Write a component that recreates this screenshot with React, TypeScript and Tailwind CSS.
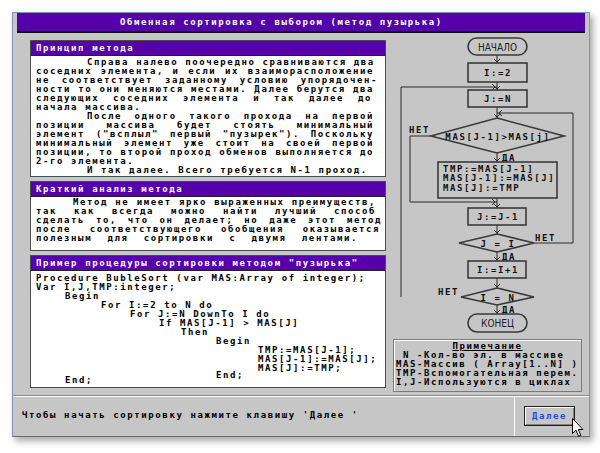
import React from "react";

const MONO = "font-['DejaVu_Sans_Mono',monospace] font-bold text-[9px] tracking-[1.6px] leading-[9px]";

type L = { t: string; pl?: number; w?: number; j?: boolean; mt?: number };

function Lines({ lines, base }: { lines: L[]; base: number }) {
  return (
    <>
      {lines.map((l, i) => (
        <div
          key={i}
          className={"whitespace-nowrap h-[9px] " + (l.j ? "text-justify [text-align-last:justify]" : "")}
          style={{ paddingLeft: l.pl ?? 0, width: l.w ?? base, marginTop: l.mt ?? 0 }}
        >
          {l.t}
        </div>
      ))}
    </>
  );
}

function Panel({ title, bodyH, pt, children }: { title: string; bodyH: number; pt: number; children: React.ReactNode }) {
  return (
    <div className="w-[356px] border border-[#4a4a4a] bg-white">
      <div className="h-[15px] bg-[#5500aa] text-white flex items-center pl-[5px] border-b border-[#202020]">
        <span className={MONO}>{title}</span>
      </div>
      <div className={"pl-[5px] text-black " + MONO} style={{ height: bodyH, paddingTop: pt }}>
        {children}
      </div>
    </div>
  );
}

const p1: L[] = [
  { t: "Справа налево поочередно сравниваются два", pl: 51, j: true },
  { t: "соседних элемента, и если их взаиморасположение", j: true },
  { t: "не соответствует заданному условию упорядочен-", j: true, w: 342 },
  { t: "ности то они меняются местами. Далее берутся два", j: true },
  { t: "следующих соседних элемента и так далее до", j: true, w: 336 },
  { t: "начала массива." },
  { t: "После одного такого прохода на первой", pl: 51, j: true },
  { t: "позиции массива будет стоять минимальный", j: true },
  { t: "элемент (\"всплыл\" первый \"пузырек\"). Поскольку", j: true },
  { t: "минимальный элемент уже стоит на своей первой", j: true },
  { t: "позиции, то второй проход обменов выполняется до", j: true },
  { t: "2-го элемента." },
  { t: "И так далее. Всего требуется N-1 проход.", pl: 51 },
];

const p2: L[] = [
  { t: "Метод не имеет ярко выраженных преимуществ,", pl: 37, j: true, w: 340 },
  { t: "так как всегда можно найти лучший способ", j: true, w: 340 },
  { t: "сделать то, что он делает; но даже этот метод", j: true, w: 346 },
  { t: "после соответствующего обобщения оказывается", j: true, w: 344 },
  { t: "полезным для сортировки с двумя лентами.", j: true, w: 322 },
];

const p3: L[] = [
  { t: "Procedure BubleSort (var MAS:Array of integer);" },
  { t: "Var I,J,TMP:integer;" },
  { t: "Begin", pl: 29 },
  { t: "For I:=2 to N do", pl: 65 },
  { t: "For J:=N DownTo I do", pl: 94 },
  { t: "If MAS[J-1] > MAS[J]", pl: 123 },
  { t: "Then", pl: 145 },
  { t: "Begin", pl: 180 },
  { t: "TMP:=MAS[J-1];", pl: 222 },
  { t: "MAS[J-1]:=MAS[J];", pl: 222 },
  { t: "MAS[J]:=TMP;", pl: 222 },
  { t: "End;", pl: 180, mt: -2 },
  { t: "End;", pl: 29, mt: -4 },
];

function Flow() {
  const box = { fill: "#c6c6c6", stroke: "#3a3a3a", strokeWidth: 1.6 };
  const ln = { fill: "none", stroke: "#2a2a2a", strokeWidth: 1 };
  const txt = {
    fontFamily: "'DejaVu Sans Mono', monospace",
    fontWeight: 700,
    fontSize: 9,
    letterSpacing: 1.6,
    fill: "#111",
  } as const;
  const thin = { fontFamily: "'DejaVu Sans Condensed','DejaVu Sans',sans-serif", fontSize: 10, fill: "#222" } as const;
  const down = (x: number, y: number) => <polyline points={`${x - 3},${y - 3} ${x},${y} ${x + 3},${y - 3}`} {...ln} />;
  return (
    <svg width={203} height={306} className="block">
      <g transform="translate(-386,-33)">
        <line x1={497} y1={55} x2={497} y2={63} {...ln} />
        {down(497, 62)}
        <line x1={497} y1={82} x2={497} y2={90} {...ln} />
        <polyline points="401,297 401,87 497,87" {...ln} />
        <polyline points="492,84 495,87 492,90" {...ln} />
        {down(497, 89)}
        <line x1={497} y1={107} x2={497} y2={118} {...ln} />
        <polyline points="534,243 573,243 573,113 497,113" {...ln} />
        <polyline points="502,110 499,113 502,116" {...ln} />
        {down(497, 117)}
        <polyline points="431,136 410,136 410,202 497,202" {...ln} />
        <line x1={497} y1={153} x2={497} y2={162} {...ln} />
        {down(497, 161)}
        <line x1={497} y1={198} x2={497} y2={208} {...ln} />
        <polyline points="492,199 495,202 492,205" {...ln} />
        {down(497, 207)}
        <line x1={497} y1={225} x2={497} y2={234} {...ln} />
        {down(497, 233)}
        <line x1={497} y1={252} x2={497} y2={261} {...ln} />
        {down(497, 260)}
        <line x1={497} y1={278} x2={497} y2={288} {...ln} />
        {down(497, 287)}
        <line x1={497} y1={305} x2={497} y2={314} {...ln} />
        {down(497, 313)}

        <rect x={468} y={38} width={59} height={17} rx={8.5} {...box} />
        <text x={497.5} y={50.5} textAnchor="middle" {...thin}>НАЧАЛО</text>

        <rect x={468} y={63} width={59} height={19} {...box} />
        <text x={498} y={76} textAnchor="middle" {...txt}>I:=2</text>

        <rect x={468} y={90} width={59} height={17} {...box} />
        <text x={498} y={102} textAnchor="middle" {...txt}>J:=N</text>

        <polygon points="497,118 564,136 497,153 431,136" {...box} />
        <text x={498} y={139.5} textAnchor="middle" {...txt}>MAS[J-1]&gt;MAS[j]</text>
        <text x={409} y={133} {...txt}>НЕТ</text>
        <text x={502} y={160.5} {...txt}>ДА</text>

        <rect x={438} y={162} width={119} height={36} {...box} />
        <text x={443} y={172} {...txt}>TMP:=MAS[J-1]</text>
        <text x={443} y={181} {...txt}>MAS[J-1]:=MAS[J]</text>
        <text x={443} y={190.5} {...txt}>MAS[J]:=TMP</text>

        <rect x={468} y={208} width={58} height={17} {...box} />
        <text x={498} y={220} textAnchor="middle" {...txt}>J:=J-1</text>

        <polygon points="497,234 534,243 497,252 459,243" {...box} />
        <text x={498} y={246.5} textAnchor="middle" {...txt}>J = I</text>
        <text x={535} y={241} {...txt}>НЕТ</text>
        <text x={502} y={259.5} {...txt}>ДА</text>

        <rect x={468} y={261} width={58} height={17} {...box} />
        <text x={498} y={273} textAnchor="middle" {...txt}>I:=I+1</text>

        <polygon points="497,288 534,297 497,305 461,297" {...box} />
        <text x={498} y={300.5} textAnchor="middle" {...txt}>I = N</text>
        <text x={438} y={295} {...txt}>НЕТ</text>
        <text x={502} y={312.5} {...txt}>ДА</text>

        <rect x={468} y={314} width={59} height={18} rx={9} {...box} />
        <text x={497.5} y={327} textAnchor="middle" {...thin}>КОНЕЦ</text>
      </g>
    </svg>
  );
}

export default function App() {
  return (
    <div className="w-[600px] h-[453px] bg-white overflow-hidden pt-[12px] pl-[12px]">
      <div className="w-[578px] h-[425px] bg-[#c6c6c6] border border-[#8593b3] border-b-[#6a6a6a] shadow-[3px_4px_7px_rgba(0,0,0,0.35)] flex flex-col">
        <div className="mx-[4px] h-[20px] bg-[#5500aa] border-b-2 border-[#101010] text-white flex items-center pl-[103px]">
          <span className={MONO}>Обменная сортировка с выбором (метод пузырька)</span>
        </div>
        <div className="h-[362px] flex">
          <div className="pl-[17px] pt-[7px] flex flex-col gap-[4px]">
            <Panel title="Принцип метода" bodyH={120} pt={2}>
              <Lines lines={p1} base={338} />
            </Panel>
            <Panel title="Краткий анализ метода" bodyH={53} pt={1}>
              <Lines lines={p2} base={338} />
            </Panel>
            <Panel title={"Пример процедуры сортировки методом \"пузырька\""} bodyH={116} pt={3}>
              <Lines lines={p3} base={340} />
            </Panel>
          </div>
          <div className="flex-1 flex flex-col">
            <Flow />
            <div className={"mx-[7px] h-[53px] border border-[#7a7a7a] shadow-[inset_1px_1px_0_#ffffff] pt-[2px] text-black " + MONO}>
              <div className="h-[9px] text-center underline">Примечание</div>
              <div className="h-[9px] whitespace-pre pl-[2px]">{" N -Кол-во эл. в массиве"}</div>
              <div className="h-[9px] whitespace-pre pl-[2px]">MAS-Массив ( Array[1..N] )</div>
              <div className="h-[9px] whitespace-pre pl-[2px]">TMP-Вспомогательная перем.</div>
              <div className="h-[9px] whitespace-pre pl-[2px]">I,J-Используются в циклах</div>
            </div>
          </div>
        </div>
        <div className="h-[41px] border-t border-[#8a8a8a] flex">
          <div className="flex-1 border-t border-white flex items-center pl-[9px] pb-[2px]">
            <span className={MONO + " text-black whitespace-pre"}>Чтобы начать сортировку нажмите клавишу 'Далее '</span>
          </div>
          <div className="w-[75px] border-t border-l border-white relative">
            <div className="ml-[9px] mt-[9px] w-[51px] h-[20px] border border-[#202020] bg-[#c6c6c6] shadow-[inset_1px_1px_0_#ffffff,inset_-1px_-1px_0_#808080] flex items-center justify-center">
              <span className={MONO + " text-[#1f4fd0]"}>Далее</span>
            </div>
            <svg className="absolute left-[57px] top-[21px]" width="13" height="20" viewBox="0 0 13 20">
              <path d="M0.5 0.5 L0.5 15.5 L4 12.2 L6.6 18.3 L8.8 17.3 L6.3 11.5 L11 11.5 Z" fill="#ffffff" stroke="#000000" strokeWidth="1" />
            </svg>
          </div>
        </div>
      </div>
    </div>
  );
}
